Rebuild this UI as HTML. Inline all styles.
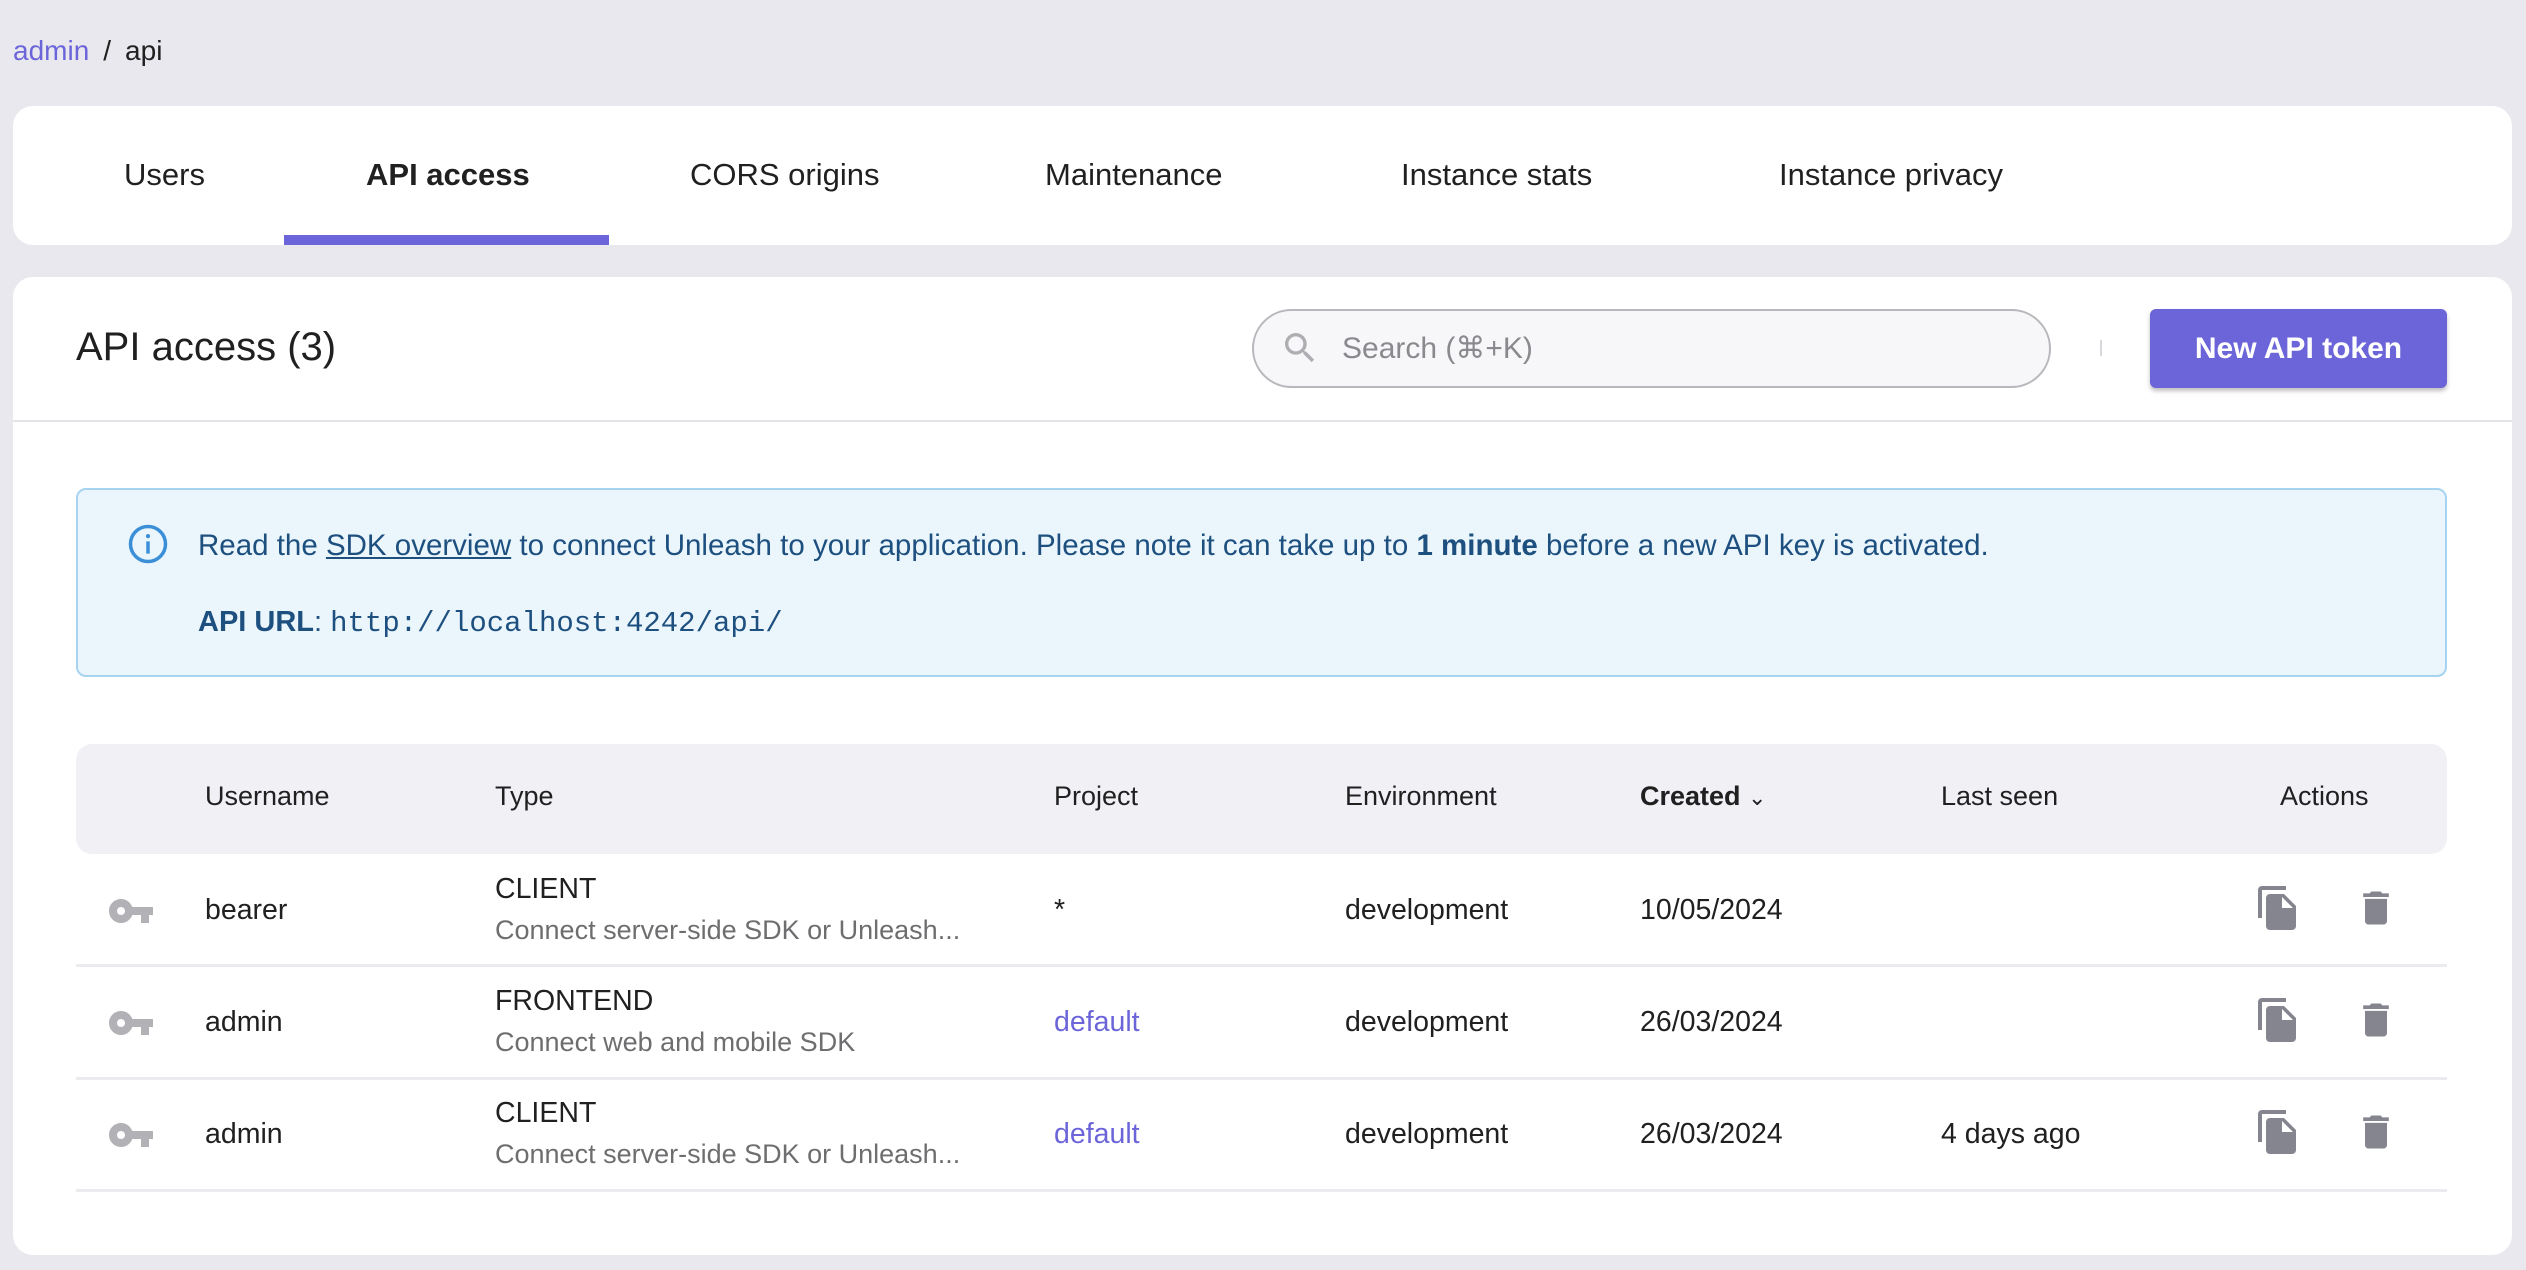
<!DOCTYPE html>
<html><head><meta charset="utf-8"><style>
*{box-sizing:border-box;margin:0;padding:0}
body{width:2526px;height:1270px;background:#e9e8ee;font-family:"Liberation Sans",sans-serif;color:#202021;position:relative;overflow:hidden}
.a{position:absolute;white-space:nowrap}
.card{position:absolute;background:#fff;border-radius:20px}
.tab{position:absolute;top:157px;font-size:31px;color:#202021}
.th{position:absolute;top:781px;font-size:27px;color:#202021}
.cell{position:absolute;font-size:28.5px;color:#202021}
.sub{color:#6e6e70;font-size:27px}
.hr{position:absolute;left:76px;width:2371px;height:3px;background:#ebebef}
svg{position:absolute}
</style></head><body>
<div class="a" style="left:13px;top:35px;font-size:28px"><span style="color:#6c65d9">admin</span><span style="margin:0 14px">/</span>api</div>

<div class="card" style="left:13px;top:106px;width:2499px;height:139px"></div>
<div class="tab" style="left:124px">Users</div>
<div class="tab" style="left:366px;font-weight:bold">API access</div>
<div class="a" style="left:284px;top:235px;width:325px;height:10px;background:#6c65d9"></div>
<div class="tab" style="left:690px">CORS origins</div>
<div class="tab" style="left:1045px">Maintenance</div>
<div class="tab" style="left:1401px">Instance stats</div>
<div class="tab" style="left:1779px">Instance privacy</div>

<div class="card" style="left:13px;top:277px;width:2499px;height:978px"></div>
<div class="a" style="left:76px;top:325px;font-size:40px">API access (3)</div>
<div class="a" style="left:13px;top:420px;width:2499px;height:2px;background:#e4e4e8"></div>
<div class="a" style="left:1252px;top:309px;width:799px;height:79px;border:2px solid #b8b8bc;border-radius:40px;background:#f7f7fa"></div>
<svg style="left:1280px;top:328px" width="40" height="40" viewBox="0 0 24 24"><path fill="#aeaeb2" d="M15.5 14h-.79l-.28-.27A6.47 6.47 0 0 0 16 9.5 6.5 6.5 0 1 0 9.5 16c1.61 0 3.09-.59 4.23-1.57l.27.28v.79l5 4.99L20.49 19l-4.99-5zm-6 0C7.01 14 5 11.99 5 9.5S7.01 5 9.5 5 14 7.01 14 9.5 11.99 14 9.5 14z"/></svg>
<div class="a" style="left:1342px;top:331px;font-size:30px;color:#8a8a8e">Search (⌘+K)</div>
<div class="a" style="left:2100px;top:340px;width:2px;height:16px;background:#d8d8dc"></div>
<div class="a" style="left:2150px;top:309px;width:297px;height:79px;background:#6c65d9;border-radius:6px;box-shadow:0 3px 4px rgba(0,0,0,.25);color:#fff;font-weight:bold;font-size:30px;text-align:center;line-height:79px">New API token</div>

<div class="a" style="left:76px;top:488px;width:2371px;height:189px;background:#eaf6fc;border:2px solid #a6d3ef;border-radius:10px"></div>
<svg style="left:127px;top:523px" width="42" height="42" viewBox="0 0 24 24"><circle cx="12" cy="12" r="10" fill="none" stroke="#3b8fd9" stroke-width="2"/><rect x="11" y="10.5" width="2" height="7" fill="#3b8fd9"/><circle cx="12" cy="7.5" r="1.2" fill="#3b8fd9"/></svg>
<div class="a" style="left:198px;top:529px;font-size:29.5px;color:#1d4f7f">Read the <u>SDK overview</u> to connect Unleash to your application. Please note it can take up to <b>1 minute</b> before a new API key is activated.</div>
<div class="a" style="left:198px;top:606px;font-size:29px;color:#1d4f7f"><b>API URL</b>: <span style="font-family:'Liberation Mono',monospace;font-size:29px">http://localhost:4242/api/</span></div>

<div class="a" style="left:76px;top:744px;width:2371px;height:110px;background:#f1f0f5;border-radius:16px"></div>
<div class="th" style="left:205px">Username</div>
<div class="th" style="left:495px">Type</div>
<div class="th" style="left:1054px">Project</div>
<div class="th" style="left:1345px">Environment</div>
<div class="th" style="left:1640px;font-weight:bold">Created <span style="font-weight:normal;font-size:22px">&#8964;</span></div>
<div class="th" style="left:1941px">Last seen</div>
<div class="th" style="left:2280px">Actions</div>

<div class="hr" style="top:964px"></div>
<div class="hr" style="top:1077px"></div>
<div class="hr" style="top:1189px"></div>

<svg style="left:109px;top:892px" width="44" height="38" viewBox="1 6 22 12"><path fill="#b2b2b6" d="M12.65 10C11.83 7.67 9.61 6 7 6c-3.31 0-6 2.69-6 6s2.69 6 6 6c2.61 0 4.83-1.67 5.65-4H17v4h4v-4h2v-4H12.65zM7 14c-1.1 0-2-.9-2-2s.9-2 2-2 2 .9 2 2-.9 2-2 2z"/></svg>
<svg style="left:109px;top:1004px" width="44" height="38" viewBox="1 6 22 12"><path fill="#b2b2b6" d="M12.65 10C11.83 7.67 9.61 6 7 6c-3.31 0-6 2.69-6 6s2.69 6 6 6c2.61 0 4.83-1.67 5.65-4H17v4h4v-4h2v-4H12.65zM7 14c-1.1 0-2-.9-2-2s.9-2 2-2 2 .9 2 2-.9 2-2 2z"/></svg>
<svg style="left:109px;top:1116px" width="44" height="38" viewBox="1 6 22 12"><path fill="#b2b2b6" d="M12.65 10C11.83 7.67 9.61 6 7 6c-3.31 0-6 2.69-6 6s2.69 6 6 6c2.61 0 4.83-1.67 5.65-4H17v4h4v-4h2v-4H12.65zM7 14c-1.1 0-2-.9-2-2s.9-2 2-2 2 .9 2 2-.9 2-2 2z"/></svg>

<div class="cell" style="left:205px;top:894px">bearer</div>
<div class="cell" style="left:495px;top:873px">CLIENT</div>
<div class="cell sub" style="left:495px;top:915px">Connect server-side SDK or Unleash...</div>
<div class="cell" style="left:1054px;top:894px">*</div>
<div class="cell" style="left:1345px;top:894px">development</div>
<div class="cell" style="left:1640px;top:894px">10/05/2024</div>

<div class="cell" style="left:205px;top:1006px">admin</div>
<div class="cell" style="left:495px;top:985px">FRONTEND</div>
<div class="cell sub" style="left:495px;top:1027px">Connect web and mobile SDK</div>
<div class="cell" style="left:1054px;top:1006px;color:#6c65d9">default</div>
<div class="cell" style="left:1345px;top:1006px">development</div>
<div class="cell" style="left:1640px;top:1006px">26/03/2024</div>

<div class="cell" style="left:205px;top:1118px">admin</div>
<div class="cell" style="left:495px;top:1097px">CLIENT</div>
<div class="cell sub" style="left:495px;top:1139px">Connect server-side SDK or Unleash...</div>
<div class="cell" style="left:1054px;top:1118px;color:#6c65d9">default</div>
<div class="cell" style="left:1345px;top:1118px">development</div>
<div class="cell" style="left:1640px;top:1118px">26/03/2024</div>
<div class="cell" style="left:1941px;top:1118px">4 days ago</div>

<svg style="left:2254px;top:884px" width="48" height="48" viewBox="0 0 24 24"><path fill="#85858f" d="M16 1H4c-1.1 0-2 .9-2 2v14h2V3h12V1zm-1 4 6 6v10c0 1.1-.9 2-2 2H7.99C6.89 23 6 22.1 6 21l.01-14c0-1.1.89-2 1.99-2h7zm-1 7h5.5L14 6.5V12z"/></svg>
<svg style="left:2354px;top:886px" width="44" height="44" viewBox="0 0 24 24"><path fill="#85858f" d="M6 19c0 1.1.9 2 2 2h8c1.1 0 2-.9 2-2V7H6v12zM19 4h-3.5l-1-1h-5l-1 1H5v2h14V4z"/></svg>
<svg style="left:2254px;top:996px" width="48" height="48" viewBox="0 0 24 24"><path fill="#85858f" d="M16 1H4c-1.1 0-2 .9-2 2v14h2V3h12V1zm-1 4 6 6v10c0 1.1-.9 2-2 2H7.99C6.89 23 6 22.1 6 21l.01-14c0-1.1.89-2 1.99-2h7zm-1 7h5.5L14 6.5V12z"/></svg>
<svg style="left:2354px;top:998px" width="44" height="44" viewBox="0 0 24 24"><path fill="#85858f" d="M6 19c0 1.1.9 2 2 2h8c1.1 0 2-.9 2-2V7H6v12zM19 4h-3.5l-1-1h-5l-1 1H5v2h14V4z"/></svg>
<svg style="left:2254px;top:1108px" width="48" height="48" viewBox="0 0 24 24"><path fill="#85858f" d="M16 1H4c-1.1 0-2 .9-2 2v14h2V3h12V1zm-1 4 6 6v10c0 1.1-.9 2-2 2H7.99C6.89 23 6 22.1 6 21l.01-14c0-1.1.89-2 1.99-2h7zm-1 7h5.5L14 6.5V12z"/></svg>
<svg style="left:2354px;top:1110px" width="44" height="44" viewBox="0 0 24 24"><path fill="#85858f" d="M6 19c0 1.1.9 2 2 2h8c1.1 0 2-.9 2-2V7H6v12zM19 4h-3.5l-1-1h-5l-1 1H5v2h14V4z"/></svg>
</body></html>
